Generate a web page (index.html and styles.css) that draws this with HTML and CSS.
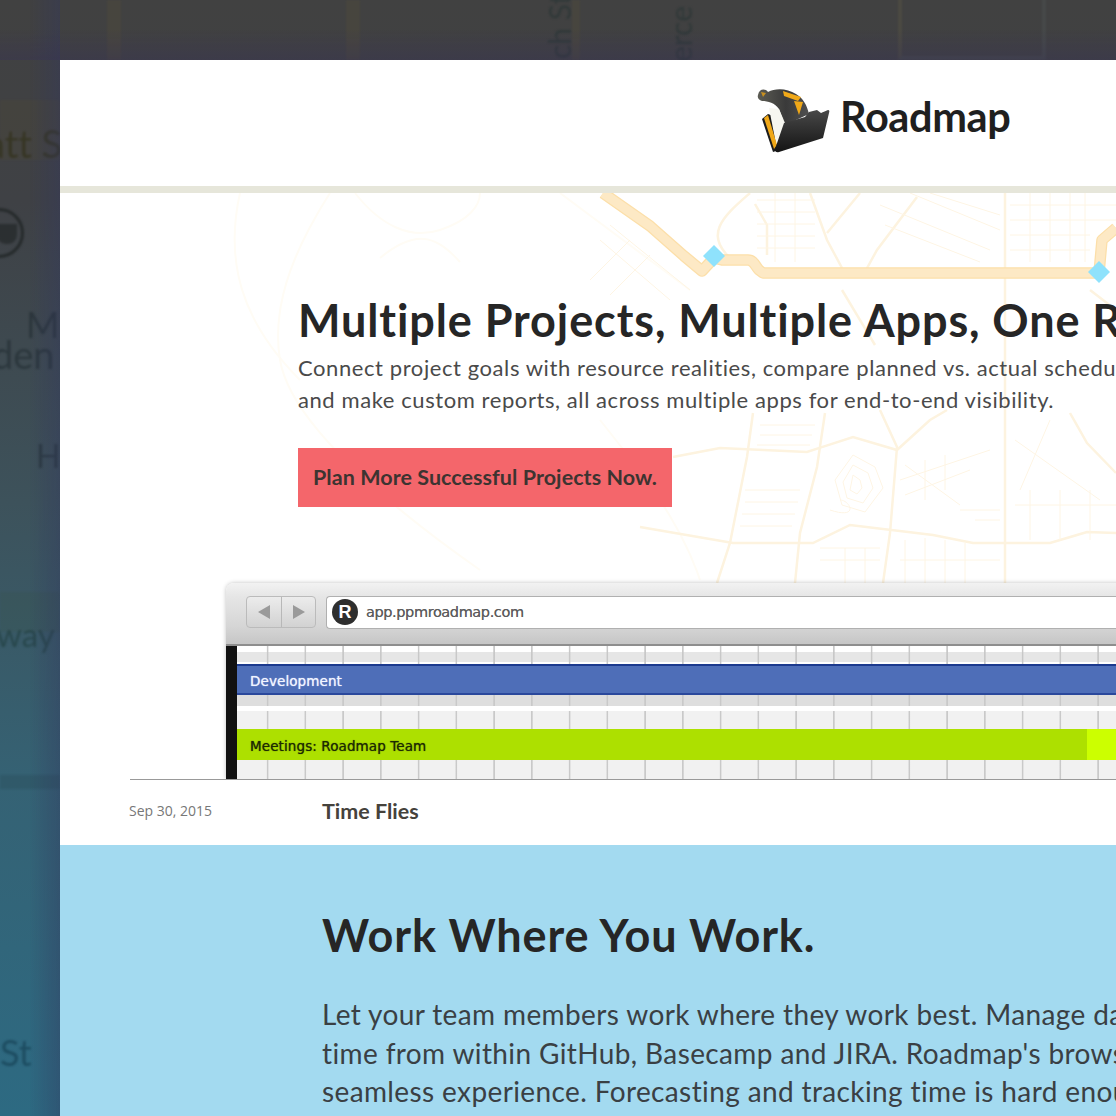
FILE: index.html
```html
<!DOCTYPE html>
<html lang="en">

<head>
    <meta charset="UTF-8">
    <meta name="viewport" content="width=device-width, initial-scale=1.0">
    <title>Roadmap</title>
    <link rel="stylesheet" href="styles.css">
</head>

<body>
    <div class="backdrop">
        <span class="bg-band band-att"></span>
        <span class="bg-band band-way"></span>
        <span class="bg-band band-low"></span>
        <span class="bg-strip strip-a"></span>
        <span class="bg-strip strip-b"></span>
        <span class="bg-strip strip-c"></span>
        <span class="bg-frame"></span>
        <span class="bg-text bg-att">att S</span>
        <span class="bg-text bg-m">M</span>
        <span class="bg-text bg-den">den</span>
        <span class="bg-text bg-h">H</span>
        <span class="bg-text bg-way">way</span>
        <span class="bg-text bg-st">St</span>
        <span class="bg-text bg-up bg-th">ch St</span>
        <span class="bg-text bg-up bg-erce">erce</span>
        <span class="bg-ring"></span>
    </div>
    <div class="shade"></div>
    <div class="shade-top"></div>

    <div class="card">
        <header class="top">
            <svg class="logo-icon" viewBox="0 0 76 70" width="76" height="70">
                <defs>
                    <linearGradient id="folder" x1="0" y1="0" x2="0" y2="1">
                        <stop offset="0" stop-color="#484848" />
                        <stop offset="1" stop-color="#141414" />
                    </linearGradient>
                    <linearGradient id="arch" x1="0" y1="0" x2="1" y2="0">
                        <stop offset="0" stop-color="#5c5c54" />
                        <stop offset=".55" stop-color="#3a3a3a" />
                        <stop offset="1" stop-color="#505050" />
                    </linearGradient>
                </defs>
                <path d="M7 34 L13 29 L32 36 L24 65 L18 67 Z" fill="#1c1c1c" />
                <path d="M3 10 C4 4 10 3 13 7 C20 3 32 3 41 9 C48 13 52 20 54 29 L30 40 L24 24 C20 18 13 16 7 16 C4 15 2 13 3 10 Z" fill="url(#arch)" />
                <path d="M14 23 L24 24 L30 38 L24 60 L21 59 Z" fill="#f6f6f0" />
                <path d="M9 33 L13 30 L22 60 L19 64 Z" fill="#f0a818" />
                <path d="M28 6 L46 12 L43 16 L29 11 Z" fill="#f0a818" />
                <path d="M39 16 L48 17 L44 30 Z" fill="#f0a818" />
                <path d="M6 7 L11 8 L8 12 Z" fill="#c89020" />
                <path d="M29 38 L50 32 L54 27 L62 25 L66 28 L73 25 Q75 25 74 28 L68 53 L24 67 Q20 68 20 64 Z" fill="url(#folder)" />
            </svg>
            <span class="logo-name">Roadmap</span>
        </header>

        <section class="hero">
            <svg class="map" viewBox="60 193 1056 390" width="1056" height="390">
                <g class="ghost">
                    <path d="M330 193 C300 240 270 300 280 360 C290 420 380 500 480 570" />
                    <path d="M240 193 C225 260 240 320 300 380" />
                    <path d="M355 193 C380 225 410 240 440 230 C470 220 480 205 480 193" />
                    <path d="M380 258 C420 225 440 240 460 262" />
                    <path d="M560 193 L690 290" />
                    <path d="M600 420 C640 470 680 520 700 580" />
                </g>
                <g class="streets">
                    <path d="M753 413 L747 457 L730 543 L717 583" />
                    <path d="M825 413 L817 467 L800 533 L795 583" />
                    <path d="M880 410 L897 447 L890 533 L883 583" />
                    <path d="M1005 193 V583" />
                    <path d="M1070 413 L1087 443 L1116 473" />
                    <path d="M673 457 L720 448 L807 452 L853 437 L897 450 L930 420 L947 410" />
                    <path d="M640 527 L733 543 L813 543 L850 525 L933 535 L973 543 L1050 543 L1087 532 L1116 533" />
                    <path d="M810 193 L827 240 L842 268" />
                    <path d="M917 197 L877 250 L866 270" />
                    <path d="M860 193 L827 233" />
                    <path d="M755 204 L767 225 L767 255" />
                    <path d="M735 262 C700 235 725 215 750 193" />
                    <path d="M842 290 L875 345" />
                    <path d="M1090 290 L1116 310" />
                </g>
                <g class="blocks">
                    <path d="M757 200 H815 M757 212 H815 M757 224 H815 M757 236 H815 M757 248 H815 M775 193 V262 M795 193 V262" />
                    <path d="M1010 205 H1116 M1010 220 H1116 M1010 235 H1090 M1010 250 H1090 M1030 193 V262 M1050 193 V262 M1070 193 V262 M1085 193 V262" />
                    <path d="M880 205 L990 250 M885 225 L980 262 M910 193 L1000 230 M930 193 L1000 215" />
                    <path d="M600 240 L670 300 M610 225 L690 290 M630 240 L590 280 M650 255 L610 295" />
                    <path d="M760 425 H815 M760 435 H812 M757 445 H810 M745 490 H800 M745 502 H798 M742 514 H795 M740 526 H792" />
                    <path d="M853 455 L875 467 L883 488 L865 512 L842 505 L835 480 Z M853 465 L868 473 L873 488 L863 503 L847 498 L843 482 Z M853 475 L860 480 L862 488 L857 494 L850 490 Z" />
                    <path d="M900 480 L990 450 M905 495 L970 470 M925 460 V500 M945 455 V490 M905 465 L960 505 M960 510 H1000" />
                    <path d="M905 540 V583 M925 538 V583 M945 540 V583 M965 543 V583 M975 520 L1000 520 M900 560 H1000" />
                    <path d="M1015 440 L1100 500 M1050 420 L1020 490 M1015 505 H1116 M1030 490 V540 M1060 490 V540 M1090 490 V540" />
                    <path d="M820 548 H880 M820 560 H880 M845 548 V583 M865 548 V583 M830 510 C860 520 850 500 840 500" />
                </g>
                <path class="route-edge" d="M603 193 L650 226 L684 256 L702 271 L714 258 L722 260 H748 C754 260 755 266 759 270 L763 273 H1099 L1102 240 L1116 228" />
                <path class="route" d="M603 193 L650 226 L684 256 L702 271 L714 258 L722 260 H748 C754 260 755 266 759 270 L763 273 H1099 L1102 240 L1116 228" />
                <path class="stop" d="M714 245 L725 256 L714 267 L703 256 Z" />
                <path class="stop" d="M1099 261 L1110 272 L1099 283 L1088 272 Z" />
            </svg>

            <div class="hero-copy">
                <h1>Multiple Projects, Multiple Apps, One Roadmap.</h1>
                <p>Connect project goals with resource realities, compare planned vs. actual schedules<br>and make custom reports, all across multiple apps for end-to-end visibility.</p>
                <a class="cta" href="#">Plan More Successful Projects Now.</a>
            </div>

            <div class="browser">
                <div class="chrome">
                    <div class="nav-btns">
                        <span class="nav-btn"><i class="arrow arrow-left"></i></span>
                        <span class="nav-btn"><i class="arrow arrow-right"></i></span>
                    </div>
                    <div class="url">
                        <span class="url-badge">R</span>
                        <span class="url-text">app.ppmroadmap.com</span>
                    </div>
                </div>
                <div class="gantt">
                    <div class="row row-head"><div class="head-band"></div></div>
                    <div class="bar bar-blue">Development</div>
                    <div class="row row-sub"></div>
                    <div class="row row-gap"></div>
                    <div class="bar bar-green">
                        <span>Meetings: Roadmap Team</span>
                        <span class="bar-end"></span>
                    </div>
                    <div class="row row-foot"></div>
                </div>
            </div>
        </section>

        <div class="log-row">
            <span class="log-date">Sep 30, 2015</span>
            <span class="log-title">Time Flies</span>
        </div>

        <section class="work">
            <h2>Work Where You Work.</h2>
            <p>Let your team members work where they work best. Manage day-to-day tasks and track<br>time from within GitHub, Basecamp and JIRA. Roadmap's browser extensions provide a<br>seamless experience. Forecasting and tracking time is hard enough already, so we've</p>
        </section>
    </div>
</body>

</html>
```

FILE: styles.css
```css
* {
    margin: 0;
    padding: 0;
    box-sizing: border-box;
}

html,
body {
    height: 100%;
    overflow: hidden;
}

body {
    position: relative;
    padding: 60px 0 0 60px;
    font-family: Lato, "Open Sans", sans-serif;
    font-variant-ligatures: none;
    background: linear-gradient(180deg, #414141 0%, #3f4145 18%, #3d525b 45%, #356274 70%, #2d6a82 100%);
}

.backdrop {
    position: absolute;
    inset: 0;
    filter: blur(1.2px);
}

.shade {
    position: absolute;
    top: 0;
    bottom: 0;
    left: 30px;
    width: 30px;
    background: linear-gradient(90deg, rgba(50, 55, 95, 0), rgba(50, 55, 95, .38));
}

.shade-top {
    position: absolute;
    top: 30px;
    left: 0;
    right: 0;
    height: 30px;
    background: linear-gradient(180deg, rgba(55, 50, 85, 0), rgba(55, 50, 85, .4));
}

.bg-text {
    position: absolute;
    font-size: 36px;
    line-height: 1;
    color: rgba(30, 40, 45, .55);
    white-space: nowrap;
}

.bg-att { left: -14px; top: 124px; font-size: 38px; color: rgba(50, 48, 25, .7); }
.bg-m { left: 26px; top: 306px; }
.bg-den { left: -8px; top: 335px; font-size: 38px; }
.bg-h { left: 36px; top: 440px; font-size: 32px; }
.bg-way { left: -4px; top: 618px; font-size: 33px; color: rgba(30, 60, 60, .6); }
.bg-st { left: 0; top: 1034px; color: rgba(25, 70, 90, .8); }

.bg-up {
    writing-mode: vertical-rl;
    transform: rotate(180deg);
    font-size: 30px;
    color: rgba(45, 55, 55, .8);
}

.bg-th { left: 544px; top: -6px; }
.bg-erce { left: 665px; top: 6px; }

.bg-ring {
    position: absolute;
    left: -26px;
    top: 208px;
    width: 50px;
    height: 50px;
    border: 3px solid rgba(30, 35, 35, .75);
    border-radius: 50%;
}

.bg-ring::after {
    content: "";
    position: absolute;
    left: 20px;
    top: 13px;
    width: 20px;
    height: 20px;
    border-radius: 0 0 9px 9px;
    background: rgba(30, 35, 35, .6);
}

.bg-band {
    position: absolute;
    left: 0;
    width: 60px;
}

.band-att { top: 100px; height: 60px; background: rgba(90, 75, 45, .18); }
.band-way { top: 592px; height: 40px; background: rgba(60, 80, 50, .14); }
.band-low { top: 775px; height: 14px; background: rgba(30, 60, 70, .22); }

.bg-strip {
    position: absolute;
    top: 0;
    height: 60px;
    width: 14px;
    background: rgba(110, 100, 50, .14);
}

.strip-a { left: 107px; }
.strip-b { left: 346px; }
.strip-c { left: 572px; width: 8px; }

.bg-frame {
    position: absolute;
    left: 898px;
    top: -10px;
    width: 148px;
    height: 70px;
    border: 4px solid rgba(110, 130, 130, .14);
    border-left-color: rgba(120, 110, 70, .2);
}

.card {
    position: relative;
    width: 1300px;
    height: 1200px;
    background: #fff;
}

.top {
    display: flex;
    align-items: center;
    height: 133px;
    padding: 0 0 14px 695px;
    border-bottom: 7px solid #e6e6da;
}

.logo-icon {
    margin: 7px 9px 0 0;
    filter: blur(.4px);
}

.logo-name {
    font-size: 41.5px;
    font-weight: 700;
    color: #1f1f1f;
    letter-spacing: -.4px;
}

.hero {
    position: relative;
    height: 587px;
    overflow: hidden;
    border-bottom: 1px solid #999;
    margin-left: 70px;
}

.map {
    position: absolute;
    left: -70px;
    top: 0;
}

.ghost,
.streets,
.blocks {
    filter: blur(.5px);
}

.ghost path,
.streets path,
.blocks path {
    fill: none;
}

.ghost path {
    stroke: #fffcf5;
    stroke-width: 2;
}

.streets path {
    stroke: #fdf3df;
    stroke-width: 2.5;
}

.blocks path {
    stroke: #fef5e4;
    stroke-width: 1;
}

.route,
.route-edge {
    fill: none;
    stroke-linejoin: round;
}

.route {
    stroke: #fde9c5;
    stroke-width: 9;
}

.route-edge {
    stroke: #fcdfa9;
    stroke-width: 11.5;
}

.stop {
    fill: #8fe2fc;
}

.hero-copy {
    position: relative;
    padding: 101px 0 0 168px;
    width: 1200px;
}

h1 {
    font-size: 45px;
    line-height: 52px;
    font-weight: 700;
    letter-spacing: .9px;
    color: #262626;
    white-space: nowrap;
}

.hero-copy p {
    margin-top: 6px;
    font-size: 22px;
    line-height: 32px;
    letter-spacing: .58px;
    color: #4a4a4a;
    white-space: nowrap;
}

.cta {
    display: inline-block;
    margin-top: 32px;
    padding: 0 15px;
    height: 59px;
    line-height: 58px;
    font-size: 21.5px;
    font-weight: 700;
    letter-spacing: .06px;
    color: #3d3431;
    background: #f4666b;
    text-decoration: none;
}

.browser {
    position: absolute;
    left: 96px;
    top: 390px;
    width: 1100px;
    height: 196px;
    overflow: hidden;
    border-radius: 8px 0 0 0;
    box-shadow: 0 0 4px rgba(0, 0, 0, .25);
}

.chrome {
    display: flex;
    align-items: center;
    gap: 10px;
    height: 63px;
    padding: 0 0 3px 20px;
    background: linear-gradient(180deg, #f2f2f2 0, #e6e6e6 22%, #d6d6d6 70%, #c6c6c6 100%);
    border-bottom: 2px solid #8e8e8e;
}

.nav-btns {
    display: flex;
    height: 32px;
    border: 1px solid #bbb;
    border-radius: 4px;
    background: linear-gradient(180deg, #ececec, #d2d2d2);
}

.nav-btn {
    display: flex;
    align-items: center;
    justify-content: center;
    width: 34px;
}

.nav-btn + .nav-btn {
    border-left: 1px solid #b8b8b8;
}

.arrow {
    width: 0;
    height: 0;
    border-top: 7px solid transparent;
    border-bottom: 7px solid transparent;
}

.arrow-left {
    border-right: 12px solid #9a9a9a;
}

.arrow-right {
    border-left: 12px solid #9a9a9a;
}

.url {
    display: flex;
    align-items: center;
    flex: 1;
    height: 33px;
    padding-left: 5px;
    background: #fff;
    border: 1px solid #b0b0b0;
    border-right: 0;
    border-radius: 4px 0 0 4px;
}

.url-badge {
    width: 26px;
    height: 26px;
    margin-right: 8px;
    border-radius: 50%;
    background: #2e2e2e;
    color: #fff;
    font: 700 18px/26px "Liberation Sans", sans-serif;
    text-align: center;
}

.url-text {
    font: 14.5px "DejaVu Sans", sans-serif;
    letter-spacing: -.4px;
    color: #5c5c5c;
    text-shadow: 0 0 .6px #777;
}

.gantt {
    height: 133px;
    border-left: 11px solid #111;
    background: #fff;
}

.row {
    background-image: repeating-linear-gradient(90deg, transparent 0, transparent 29.4px, #c9c9c9 30.2px, #c9c9c9 31px, transparent 31.8px, transparent 37.75px);
}

.row-head {
    height: 18px;
    padding-top: 6px;
}

.head-band {
    height: 10px;
    background: rgba(200, 200, 200, .45);
}

.row-sub {
    height: 11px;
    background-color: #dedede;
}

.row-gap {
    height: 23px;
    background-color: #f1f1f1;
    border-top: 5px solid #fff;
}

.row-foot {
    height: 19px;
    background-color: #f1f1f1;
}

.bar {
    display: flex;
    align-items: center;
    height: 31px;
    padding: 3px 0 0 13px;
    font: 13.5px "DejaVu Sans", sans-serif;
    letter-spacing: .1px;
}

.bar-blue {
    color: #f2f5ff;
    background: #4e6eb8;
    border-top: 2px solid #1c3a8e;
    border-bottom: 2px solid #2a489c;
    text-shadow: 0 0 1px #dfe6ff;
}

.bar-green {
    position: relative;
    color: #1d2a00;
    background: #ade000;
    text-shadow: 0 0 1px #38460a;
}

.bar-end {
    position: absolute;
    top: 0;
    bottom: 0;
    left: 850px;
    right: 0;
    background: #ccff00;
}

.log-row {
    display: flex;
    align-items: center;
    height: 65px;
    padding: 0 0 4px 69px;
}

.log-date {
    width: 193px;
    font: 14px "Open Sans", sans-serif;
    color: #777;
}

.log-title {
    font-size: 21.5px;
    font-weight: 700;
    color: #45423c;
}

.work {
    padding: 62px 0 0 262px;
    height: 400px;
    background: #a3daf0;
}

h2 {
    font-size: 45px;
    line-height: 56px;
    font-weight: 700;
    letter-spacing: .9px;
    color: #262626;
    white-space: nowrap;
}

.work p {
    margin-top: 32px;
    font-size: 28px;
    line-height: 38.5px;
    letter-spacing: .38px;
    color: #3a4044;
    white-space: nowrap;
}
```
